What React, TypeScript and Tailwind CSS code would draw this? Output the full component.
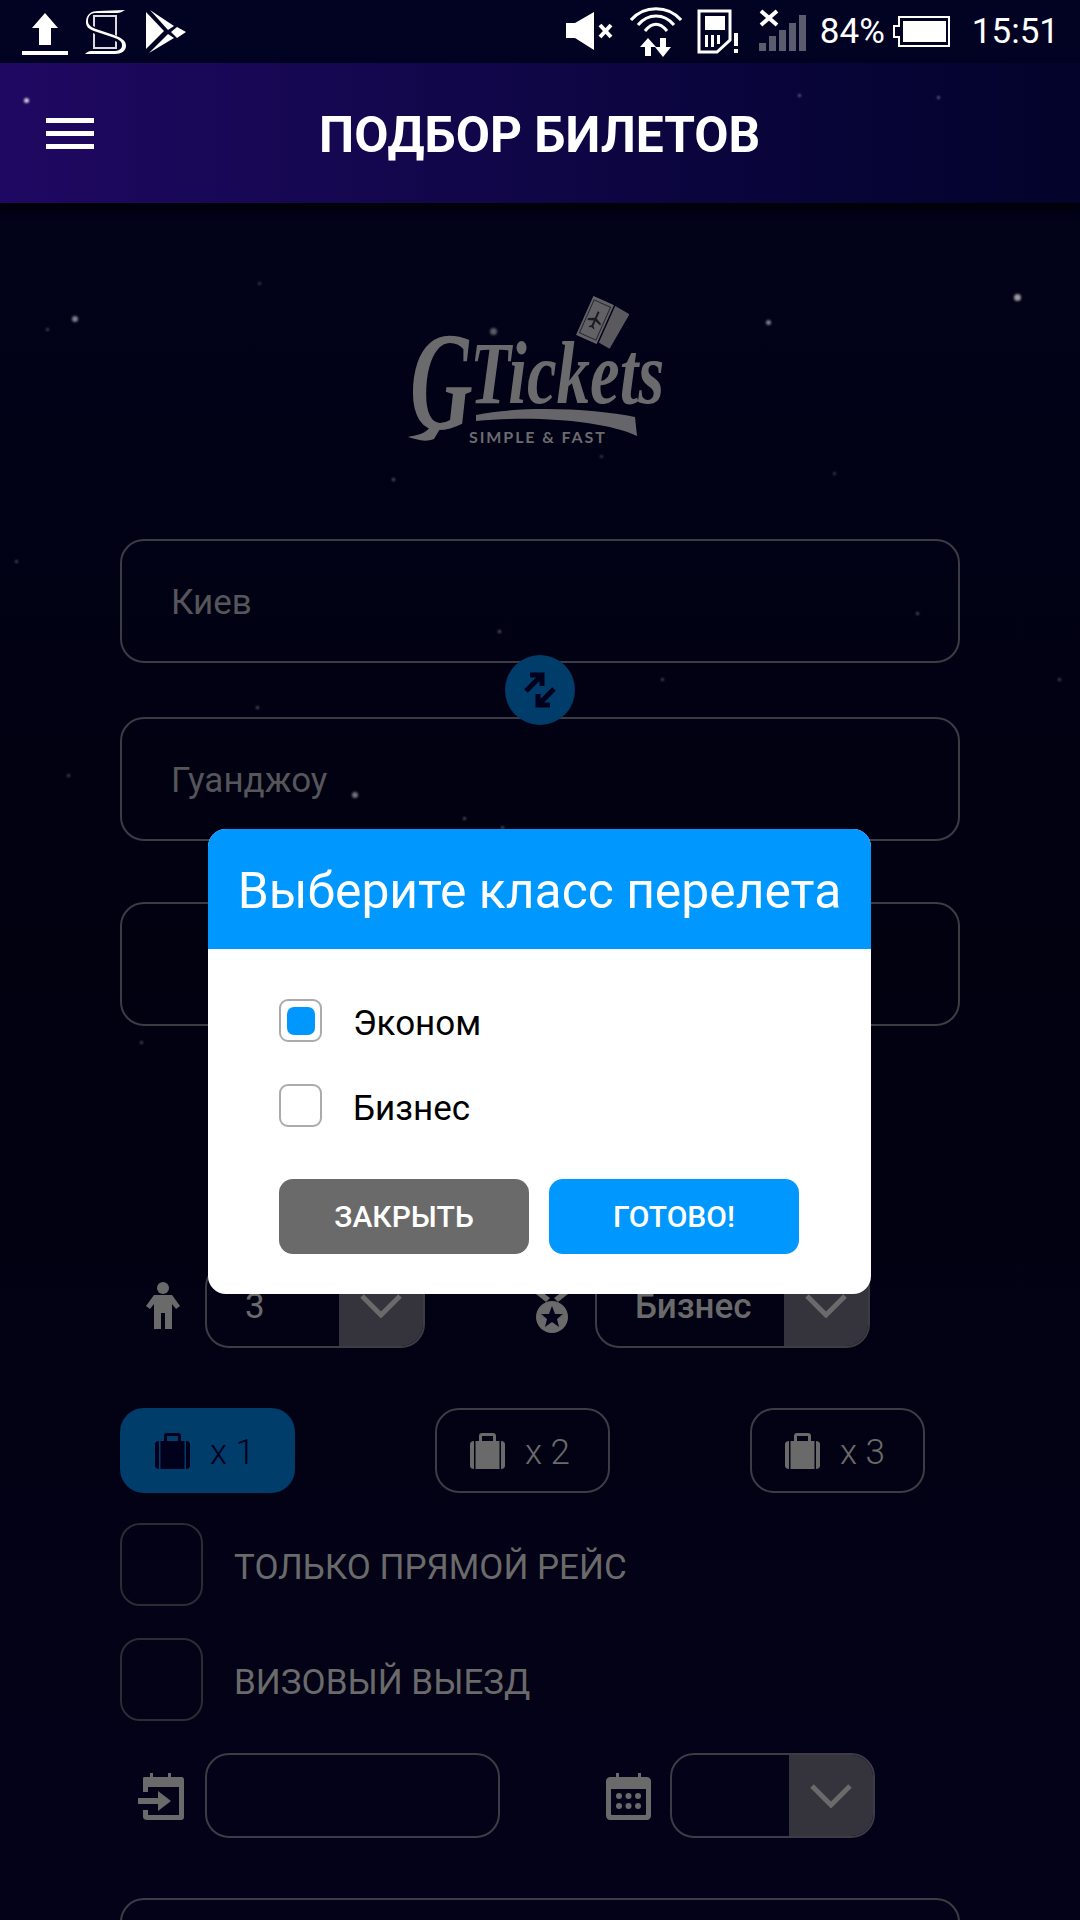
import React from "react";

const stars = [
  [24, 98, 5, 0.8], [46, 328, 3, 0.3], [72, 316, 6, 0.5], [798, 94, 3, 0.4], [937, 96, 3, 0.4],
  [1014, 294, 7, 0.6], [766, 320, 5, 0.5], [490, 328, 7, 0.35], [258, 282, 3, 0.25], [392, 478, 3, 0.4],
  [15, 560, 3, 0.3], [498, 630, 3, 0.4], [661, 678, 3, 0.3], [256, 706, 3, 0.35], [916, 612, 3, 0.35],
  [1058, 678, 3, 0.3], [67, 774, 3, 0.3], [352, 792, 6, 0.45], [463, 817, 3, 0.35], [501, 826, 3, 0.35],
  [140, 1041, 3, 0.3], [833, 472, 3, 0.25], [600, 455, 3, 0.25],
];

function Star({ s }: { s: number[] }) {
  return (
    <div
      className="absolute rounded-full bg-white blur-[1px]"
      style={{ left: s[0], top: s[1], width: s[2], height: s[2], opacity: s[3] }}
    />
  );
}

function StatusIcons() {
  return (
    <div className="flex h-[63px] items-center justify-between bg-[#020322] pr-[21px] text-white">
      <svg width="200" height="63" viewBox="0 0 200 63" fill="white">
        {/* upload */}
        <path d="M45 13 L58 28 L51 28 L51 45 L39 45 L39 28 L32 28 Z" />
        <rect x="22" y="51" width="46" height="4" />
        {/* S app */}
        <path d="M86 22 C86 14 92 11 98 11 L125 10 C122 12 120 13 117 13 L95 13 C90 13 88 17 88 21 C88 25 91 27 96 29 L114 35 C122 38 126 41 126 46 C126 51 121 54 115 54 L85 54 C87 52 89 51 91 51 L113 51 C119 51 122 49 122 45 C122 41 118 39 112 37 L94 31 C89 29 86 27 86 22 Z" />
        <path d="M93 15 H117 V17 H95 V27 L93 26 Z M115 17 H117 V36 L115 35 Z M93 33 L95 34 V47 H115 V41 L117 42 V49 H93 Z" fillOpacity="0.85" />
        {/* play store */}
        <path d="M146 12 L146 49 L164 31 Z" />
        <path d="M150 10 L174 26 L168 30 Z" />
        <path d="M177 27 L186 32 L177 38 L171 32 Z" />
        <path d="M149 53 L168 34 L174 38 Z" />
      </svg>
      <div className="flex items-center">
        <svg width="48" height="63" viewBox="0 0 48 63" fill="white" className="mr-[17px]">
          <path d="M1 23 L10 23 L29 12 L29 50 L10 38 L1 38 Z" />
          <path d="M35 25 L46 37 M46 25 L35 37" stroke="white" strokeWidth="4" />
        </svg>
        <svg width="52" height="63" viewBox="0 0 52 63" fill="none" stroke="white" strokeWidth="3" className="mr-[15px]">
          <path d="M1 20 C14 5 38 5 51 20" />
          <path d="M8 25 C18 13 34 13 44 25" />
          <path d="M15 31 C22 22 30 22 37 31" />
          <path d="M18 38 L10 47 L15 47 L15 56 L21 56 L21 47 L26 47 Z" fill="white" stroke="none" />
          <path d="M30 38 L36 38 L36 47 L41 47 L33 57 L25 47 L30 47 Z" fill="white" stroke="none" />
        </svg>
        <svg width="44" height="63" viewBox="0 0 44 63" fill="none" className="mr-[18px]">
          <path d="M2 11 L33 11 L33 40 L20 52 L2 52 Z" stroke="white" strokeWidth="3" />
          <rect x="8" y="16" width="20" height="14" fill="white" />
          <path d="M8 35 V47 H11 V35 Z M14 35 V47 H17 V35 Z M20 35 V44 H23 V35 Z" fill="white" />
          <rect x="37" y="33" width="4" height="13" fill="white" />
          <rect x="37" y="49" width="4" height="4" fill="white" />
        </svg>
        <svg width="47" height="63" viewBox="0 0 47 63" className="mr-[14px]">
          <g fill="#5b5d6e">
            <rect x="0" y="43" width="7" height="8" />
            <rect x="10" y="36" width="7" height="15" />
            <rect x="20" y="30" width="7" height="21" />
            <rect x="30" y="23" width="7" height="28" />
            <rect x="40" y="15" width="7" height="36" />
          </g>
          <path d="M2 11 L18 25 M18 11 L2 25" stroke="white" strokeWidth="4" />
        </svg>
        <span className="mr-[8px] font-['Roboto'] text-[35px] leading-none">84%</span>
        <svg width="58" height="63" viewBox="0 0 58 63" fill="none" className="mr-[21px]">
          <path d="M6 17 L56 17 L56 46 L6 46 L6 37 L1 37 L1 26 L6 26 Z" stroke="white" strokeWidth="2" />
          <rect x="10" y="21" width="43" height="21" fill="white" />
        </svg>
        <span className="font-['Roboto'] text-[35px] leading-none">15:51</span>
      </div>
    </div>
  );
}

function Logo() {
  return (
    <svg width="270" height="180" viewBox="0 0 270 180" className="ml-[406px]">
      {/* tickets */}
      <g transform="rotate(30 204 33)">
        <rect x="193" y="13" width="22" height="40" rx="1" fill="#5a5a5e" />
      </g>
      <g transform="rotate(24 189 27)">
        <rect x="177" y="5" width="24" height="44" rx="1" fill="#626266" stroke="#02021a" strokeWidth="1.5" />
        <rect x="180" y="9" width="18" height="36" fill="none" stroke="#26262e" strokeWidth="1" />
        <path d="M188 18 L190 18 L190 25 L196 28 L196 30 L190 28 L190 33 L192 35 L192 36 L189 35 L186 36 L186 35 L188 33 L188 28 L182 30 L182 28 L188 25 Z" fill="#1b1b22" />
      </g>
      {/* wordmark */}
      <path d="M2 144 C10 146 18 150 28 146 L34 136 L24 134 C18 142 10 142 2 144 Z" fill="#6b6b6e" />
      <text transform="translate(4 136) scale(0.62 1)" fontFamily="'Liberation Serif', serif" fontSize="140" fontWeight="700" fontStyle="italic" fill="#6b6b6e">G</text>
      <text transform="translate(64 110) scale(0.76 1)" fontFamily="'Liberation Serif', serif" fontSize="88" fontWeight="700" fontStyle="italic" fill="#6b6b6e">Tickets</text>
      {/* underline swoosh */}
      <path d="M70 122 C120 112 190 116 229 124 L231 143 C200 128 130 122 70 128 Z" fill="#66666a" />
      <text x="63" y="150" fontFamily="Lato, sans-serif" fontSize="16" fontWeight="700" letterSpacing="1.9" fill="#6b6b6e">SIMPLE &amp; FAST</text>
    </svg>
  );
}

function Field({ text, className }: { text?: string; className?: string }) {
  return (
    <div className={`flex h-[124px] w-[840px] shrink-0 items-center rounded-[24px] border-2 border-[#3c3c44] pl-[49px] pt-[4px] text-[35px] text-[#55555a] ${className ?? ""}`}>
      {text}
    </div>
  );
}

function Chevron() {
  return (
    <svg width="42" height="24" viewBox="0 0 42 24" fill="none" stroke="#6a6a6a" strokeWidth="5">
      <path d="M2 2 L21 21 L40 2" />
    </svg>
  );
}

function Select({ width, btn, text, bold }: { width: string; btn: string; text?: string; bold?: boolean }) {
  return (
    <div className={`flex h-[85px] overflow-hidden rounded-[24px] border-2 border-[#3c3c44] ${width}`}>
      <div className={`flex flex-1 items-center pl-[38px] pt-[4px] text-[35px] text-[#6a6a6a] ${bold ? "font-medium" : ""}`}>{text}</div>
      <div className={`flex items-center justify-center bg-[#35343c] ${btn}`}>
        <Chevron />
      </div>
    </div>
  );
}

function Bag({ count, active, className }: { count: number; active?: boolean; className?: string }) {
  const color = active ? "text-[#00001c]" : "text-[#6a6a6a]";
  return (
    <div className={`flex h-[85px] w-[175px] items-center justify-center gap-[20px] rounded-[24px] pr-[5px] ${active ? "bg-[#003d6b]" : "border-2 border-[#3c3c44]"} ${color} ${className ?? ""}`}>
      <svg width="35" height="36" viewBox="0 0 35 36" fill="currentColor">
        <path d="M9 8 V3 C9 1 10 0 12 0 H23 C25 0 26 1 26 3 V8 H23 V3 H12 V8 Z" />
        <path d="M5.500 8 H29.500 V36 H5.500 Z" />
        <path d="M0 11 C0 9 2 8 4 8 V36 C2 36 0 35 0 33 Z M31 8 C33 8 35 9 35 11 V33 C35 35 33 36 31 36 Z" />
      </svg>
      <span className="pt-[4px] text-[35px] font-light leading-none">x {count}</span>
    </div>
  );
}

function Check({ label, className }: { label: string; className?: string }) {
  return (
    <div className={`flex items-center ${className ?? ""}`}>
      <div className="h-[83px] w-[83px] rounded-[20px] border-2 border-[#2c2c34]" />
      <span className="ml-[31px] pt-[7px] text-[35px] text-[#6a6a6a]">{label}</span>
    </div>
  );
}

function DialogCheck({ label, checked, className }: { label: string; checked?: boolean; className?: string }) {
  return (
    <div className={`flex items-center ${className ?? ""}`}>
      <div className="flex h-[43px] w-[43px] items-center justify-center rounded-[9px] border-2 border-[#ababab]">
        {checked && <div className="h-[28px] w-[28px] rounded-[7px] bg-[#0098ff]" />}
      </div>
      <span className="ml-[31px] pt-[6px] text-[35px] leading-none text-black">{label}</span>
    </div>
  );
}

export default function App() {
  return (
    <div className="relative h-[1920px] w-full overflow-hidden bg-gradient-to-b from-[#02021c] via-[#010110] to-[#040219] font-['Roboto',sans-serif]">
      <StatusIcons />

      {/* APP BAR */}
      <div className="flex h-[140px] items-center bg-gradient-to-r from-[#1f0862] via-[#0f0646] to-[#03032b] pl-[46px] shadow-[0_6px_8px_#020208]">
        <div className="flex w-[48px] flex-col gap-[8px]">
          <div className="h-[5px] bg-white" />
          <div className="h-[5px] bg-white" />
          <div className="h-[5px] bg-white" />
        </div>
        <h1 className="ml-[225px] pt-[5px] text-[49.700px] font-bold text-white">ПОДБОР БИЛЕТОВ</h1>
      </div>

      {/* FORM */}
      <div className="flex flex-col">
        <div className="h-[336px] pt-[90px]">
          <Logo />
        </div>
        <div className="relative flex flex-col items-start pl-[120px]">
          <Field text="Киев" />
          <Field text="Гуанджоу" className="mt-[54px]" />
          <Field className="mt-[61px]" />
          <div className="absolute left-[505px] top-[116px] flex h-[70px] w-[70px] items-center justify-center rounded-full bg-[#003d6b]">
            <svg width="34" height="36" viewBox="0 0 34 36" fill="none" stroke="#00001c" strokeWidth="5">
              <path d="M3 19 L17 5 M7 3 H19 V14" />
              <path d="M31 17 L17 31 M27 33 H15 V22" />
            </svg>
          </div>
        </div>

        <div className="ml-[120px] mt-[237px] flex items-center">
          <div className="flex w-[85px] justify-center">
            <svg width="34" height="47" viewBox="0 0 34 47" fill="#6a6a6a">
              <circle cx="17" cy="6" r="6" />
              <path d="M8 13 H26 L34 24 L30 27 L26 22 V47 H19 V31 H15 V47 H8 V22 L4 27 L0 24 Z" />
            </svg>
          </div>
          <Select width="w-[220px]" btn="w-[84px]" text="3" />
          <div className="flex w-[170px] justify-end pr-[27px] pt-[8px]">
            <svg width="32" height="46" viewBox="0 0 32 46" fill="#6a6a6a">
              <circle cx="16" cy="30" r="16" />
              <path d="M16 19 L19 27 L27 27 L21 32 L23 40 L16 35 L9 40 L11 32 L5 27 L13 27 Z" fill="#02021a" />
              <path d="M2 2 L14 11 L10 15 L0 7 Z M30 2 L18 11 L22 15 L32 7 Z" />
            </svg>
          </div>
          <Select width="w-[275px]" btn="w-[84px]" text="Бизнес" bold />
        </div>

        <div className="ml-[120px] mt-[60px] flex">
          <Bag count={1} active />
          <Bag count={2} className="ml-[140px]" />
          <Bag count={3} className="ml-[140px]" />
        </div>

        <Check label="ТОЛЬКО ПРЯМОЙ РЕЙС" className="ml-[120px] mt-[30px]" />
        <Check label="ВИЗОВЫЙ ВЫЕЗД" className="ml-[120px] mt-[32px]" />

        <div className="ml-[120px] mt-[32px] flex items-center">
          <div className="flex w-[85px] justify-center pr-[4px]">
            <svg width="46" height="48" viewBox="0 0 46 48" fill="#6a6a6a">
              <path d="M6 5 H12 V1 H15 V5 H30 V1 H33 V5 H44 C45 5 46 6 46 8 V45 C46 47 45 48 43 48 H9 C7 48 5 47 5 45 V38 H10 V43 H41 V15 H10 V20 H5 V8 C5 6 5 5 6 5 Z" />
              <path d="M0 26 H20 V19 L33 29 L20 39 V32 H0 Z" />
            </svg>
          </div>
          <Select width="w-[295px]" btn="hidden" />
          <div className="flex w-[170px] justify-end pr-[19px]">
            <svg width="45" height="48" viewBox="0 0 45 48" fill="#6a6a6a">
              <path fillRule="evenodd" d="M4 5 H10 V1 H13 V5 H32 V1 H35 V5 H41 C43 5 45 7 45 9 V44 C45 46 43 48 41 48 H4 C2 48 0 46 0 44 V9 C0 7 2 5 4 5 Z M5 17 V42 C5 43 6 43 7 43 H38 C39 43 40 43 40 42 V17 Z" />
              <g>
                <circle cx="13" cy="24" r="3" /><circle cx="22.500" cy="24" r="3" /><circle cx="32" cy="24" r="3" />
                <circle cx="13" cy="34" r="3" /><circle cx="22.500" cy="34" r="3" /><circle cx="32" cy="34" r="3" />
              </g>
            </svg>
          </div>
          <Select width="w-[205px]" btn="w-[84px]" />
        </div>

        <Field className="ml-[120px] mt-[60px]" />
      </div>

      {stars.map((s, i) => (
        <Star key={i} s={s} />
      ))}

      {/* DIALOG */}
      <div className="absolute left-[208px] top-[829px] w-[663px] overflow-hidden rounded-[18px] bg-white">
        <div className="flex h-[120px] items-center justify-center bg-[#0098ff] pt-[4px] text-[49.800px] text-white">
          Выберите класс перелета
        </div>
        <div className="pb-[40px] pl-[71px] pt-[50px]">
          <DialogCheck label="Эконом" checked />
          <DialogCheck label="Бизнес" className="mt-[42px]" />
          <div className="mt-[52px] flex gap-[20px]">
            <button className="h-[75px] w-[250px] rounded-[14px] bg-[#6a6a6a] text-[30px] font-medium text-white">ЗАКРЫТЬ</button>
            <button className="h-[75px] w-[250px] rounded-[14px] bg-[#0098ff] text-[30px] font-medium text-white">ГОТОВО!</button>
          </div>
        </div>
      </div>
    </div>
  );
}
